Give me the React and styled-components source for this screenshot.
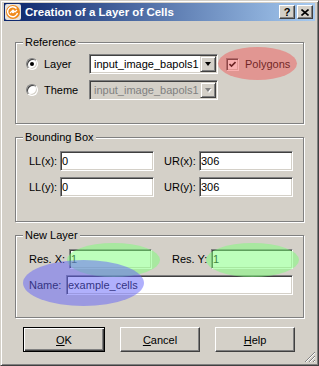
import React from 'react';
import styled, { createGlobalStyle } from 'styled-components';

const Global = createGlobalStyle`
  body {
    margin: 0;
    background: #ffffff;
  }
`;

const Window = styled.div`
  position: relative;
  width: 319px;
  height: 366px;
  box-sizing: border-box;
  background: #d4d0c8;
  border: 1px solid;
  border-color: #d4d0c8 #404040 #404040 #d4d0c8;
  box-shadow: inset 1px 1px #ffffff, inset -1px -1px #808080;
  padding: 2px 3px 3px 3px;
  display: flex;
  flex-direction: column;
  font-family: "Liberation Sans", Arial, sans-serif;
  font-size: 11px;
  color: #000;
  overflow: hidden;
`;

const TitleBar = styled.div`
  height: 18px;
  display: flex;
  align-items: center;
  padding: 0 2px 0 1px;
  background: linear-gradient(to right, #0a246a, #a6caf0);
`;

const TitleText = styled.div`
  margin-left: 4px;
  color: #fff;
  font-weight: bold;
  font-size: 11.5px;
  white-space: nowrap;
`;

const TitleButtons = styled.div`
  margin-left: auto;
  display: flex;
  gap: 2px;
`;

const TitleButton = styled.div`
  width: 16px;
  height: 14px;
  box-sizing: border-box;
  background: #d4d0c8;
  border: 1px solid;
  border-color: #ffffff #404040 #404040 #ffffff;
  box-shadow: inset -1px -1px #808080;
  display: flex;
  align-items: center;
  justify-content: center;
  font-weight: bold;
  font-size: 11px;
  line-height: 1;
`;

const Body = styled.div`
  padding: 21px 0 0 11px;
  display: flex;
  flex-direction: column;
  gap: 13px;
`;

const GroupBox = styled.div`
  position: relative;
  width: 289px;
  height: ${p => p.$h}px;
  box-sizing: border-box;
  border: 1px solid #808080;
  box-shadow: inset 1px 1px #ffffff, 1px 1px #ffffff;
  padding: ${p => p.$pad};
  display: flex;
  flex-direction: column;
  gap: 6px;
`;

const Legend = styled.span`
  position: absolute;
  top: -7px;
  left: 7px;
  padding: 0 2px;
  line-height: 13px;
  background: #d4d0c8;
`;

const Row = styled.div`
  height: 20px;
  display: flex;
  align-items: center;
`;

const Radio = styled.span`
  width: 12px;
  height: 12px;
  box-sizing: border-box;
  border-radius: 50%;
  border: 1px solid;
  border-color: #808080 #ffffff #ffffff #808080;
  box-shadow: inset 1px 1px #404040, inset -1px -1px #d4d0c8;
  background: #fff;
  margin-right: 6px;
  display: flex;
  align-items: center;
  justify-content: center;

  &::after {
    content: '';
    width: 4px;
    height: 4px;
    border-radius: 50%;
    background: ${p => (p.$checked ? '#000' : 'transparent')};
  }
`;

const Label = styled.span`
  width: ${p => p.$w}px;
  flex: none;
  white-space: nowrap;
  margin-left: ${p => p.$ml || 0}px;
`;

const Select = styled.div`
  width: 129px;
  height: 20px;
  box-sizing: border-box;
  display: flex;
  border: 1px solid;
  border-color: #808080 #ffffff #ffffff #808080;
  box-shadow: inset 1px 1px #404040, inset -1px -1px #d4d0c8;
  padding: 1px;
  background: ${p => (p.$disabled ? '#d4d0c8' : '#fff')};
  color: ${p => (p.$disabled ? '#808080' : '#000')};
`;

const SelectText = styled.span`
  flex: 1;
  padding-left: 3px;
  line-height: 16px;
  white-space: nowrap;
  overflow: hidden;
`;

const ArrowButton = styled.span`
  width: 16px;
  height: 16px;
  box-sizing: border-box;
  background: #d4d0c8;
  border: 1px solid;
  border-color: #d4d0c8 #404040 #404040 #d4d0c8;
  box-shadow: inset 1px 1px #ffffff, inset -1px -1px #808080;
  display: flex;
  align-items: center;
  justify-content: center;

  &::after {
    content: '';
    width: 0;
    height: 0;
    border-left: 3.5px solid transparent;
    border-right: 3.5px solid transparent;
    border-top: 4px solid ${p => (p.$disabled ? '#808080' : '#000')};
    filter: ${p => (p.$disabled ? 'drop-shadow(1px 1px 0 #fff)' : 'none')};
  }
`;

const CheckBox = styled.span`
  width: 13px;
  height: 13px;
  box-sizing: border-box;
  margin: 0 6px 0 8px;
  background: #fff;
  border: 1px solid;
  border-color: #808080 #ffffff #ffffff #808080;
  box-shadow: inset 1px 1px #404040, inset -1px -1px #d4d0c8;
  display: flex;
  align-items: center;
  justify-content: center;
`;

const TextInput = styled.input`
  width: ${p => p.$w}px;
  height: 20px;
  box-sizing: border-box;
  margin: 0;
  padding: 0 0 0 1px;
  border: 1px solid;
  border-color: #808080 #ffffff #ffffff #808080;
  box-shadow: inset 1px 1px #404040, inset -1px -1px #d4d0c8;
  outline: none;
  background: #fff;
  font-family: "Liberation Sans", Arial, sans-serif;
  font-size: 11px;
  color: #000;
`;

const ButtonRow = styled.div`
  display: flex;
  padding: 9px 0 0 19px;
  gap: 15px;
`;

const Button = styled.button`
  width: ${p => p.$w}px;
  height: 25px;
  box-sizing: border-box;
  margin: 0;
  padding: 0;
  background: #d4d0c8;
  font-family: "Liberation Sans", Arial, sans-serif;
  font-size: 11px;
  color: #000;
  border: 1px solid;
  border-color: ${p => (p.$default ? '#000' : '#ffffff #404040 #404040 #ffffff')};
  box-shadow: ${p =>
    p.$default
      ? 'inset 1px 1px #ffffff, inset -1px -1px #404040, inset -2px -2px #808080'
      : 'inset -1px -1px #808080'};
`;

const Mark = styled.div`
  position: absolute;
  left: ${p => p.$x}px;
  top: ${p => p.$y}px;
  width: ${p => p.$w}px;
  height: ${p => p.$h}px;
  border-radius: 50%;
  background: ${p => p.$color};
  pointer-events: none;
`;

const Grip = styled.svg`
  position: absolute;
  right: 2px;
  bottom: 2px;
`;

const AppIcon = () => (
  <svg width="16" height="16" viewBox="0 0 16 16">
    <rect x="0" y="0" width="16" height="16" rx="2" fill="#e6e2dc" />
    <circle cx="8" cy="8" r="7" fill="#f08a1c" />
    <path d="M11.5 4.5 A5 5 0 1 0 12.5 9" fill="none" stroke="#fff" strokeWidth="1.4" />
    <path d="M5 9 L8 6 L10 8 L12 6" fill="none" stroke="#fff" strokeWidth="1.2" />
    <circle cx="8" cy="8" r="1.2" fill="#fff" />
  </svg>
);

const CloseGlyph = () => (
  <svg width="8" height="7" viewBox="0 0 8 7">
    <path d="M0.5 0.5 L7.5 6.5 M7.5 0.5 L0.5 6.5" stroke="#000" strokeWidth="1.6" />
  </svg>
);

const CheckGlyph = () => (
  <svg width="7" height="7" viewBox="0 0 7 7">
    <path d="M0.5 3 L2.5 5 L6.5 1" fill="none" stroke="#000" strokeWidth="1.6" />
  </svg>
);

const App = () => {
  return (
    <>
      <Global />
      <Window>
        <TitleBar>
          <AppIcon />
          <TitleText>Creation of a Layer of Cells</TitleText>
          <TitleButtons>
            <TitleButton>?</TitleButton>
            <TitleButton><CloseGlyph /></TitleButton>
          </TitleButtons>
        </TitleBar>

        <Body>
          <GroupBox $h={82} $pad="11px 0 0 10px">
            <Legend>Reference</Legend>
            <Row>
              <Radio $checked />
              <Label $w={45}>Layer</Label>
              <Select>
                <SelectText>input_image_bapols1</SelectText>
                <ArrowButton />
              </Select>
              <CheckBox><CheckGlyph /></CheckBox>
              <span>Polygons</span>
            </Row>
            <Row>
              <Radio />
              <Label $w={45}>Theme</Label>
              <Select $disabled>
                <SelectText>input_image_bapols1</SelectText>
                <ArrowButton $disabled />
              </Select>
            </Row>
          </GroupBox>

          <GroupBox $h={85} $pad="13px 0 0 13px">
            <Legend>Bounding Box</Legend>
            <Row>
              <Label $w={31}>LL(x):</Label>
              <TextInput $w={94} defaultValue="0" />
              <Label $w={35} $ml={10}>UR(x):</Label>
              <TextInput $w={94} defaultValue="306" />
            </Row>
            <Row>
              <Label $w={31}>LL(y):</Label>
              <TextInput $w={94} defaultValue="0" />
              <Label $w={35} $ml={10}>UR(y):</Label>
              <TextInput $w={94} defaultValue="306" />
            </Row>
          </GroupBox>

          <GroupBox $h={83} $pad="13px 0 0 13px">
            <Legend>New Layer</Legend>
            <Row>
              <Label $w={40}>Res. X:</Label>
              <TextInput $w={83} defaultValue="1" />
              <Label $w={39} $ml={20}>Res. Y:</Label>
              <TextInput $w={82} defaultValue="1" />
            </Row>
            <Row>
              <Label $w={37}>Name:</Label>
              <TextInput $w={227} defaultValue="example_cells" />
            </Row>
          </GroupBox>
        </Body>

        <ButtonRow>
          <Button $w={82} $default><u>O</u>K</Button>
          <Button $w={80}><u>C</u>ancel</Button>
          <Button $w={80}><u>H</u>elp</Button>
        </ButtonRow>

        <Grip width="12" height="12" viewBox="0 0 12 12">
          <path d="M11 1 L1 11 M11 5 L5 11 M11 9 L9 11" stroke="#808080" strokeWidth="1" />
          <path d="M11 2 L2 11 M11 6 L6 11 M11 10 L10 11" stroke="#fff" strokeWidth="1" />
        </Grip>

        <Mark $x={217} $y={46} $w={79} $h={33} $color="rgba(241, 79, 80, 0.45)" />
        <Mark $x={66} $y={242} $w={93} $h={34} $color="rgba(124, 255, 120, 0.5)" />
        <Mark $x={205} $y={242} $w={93} $h={34} $color="rgba(124, 255, 120, 0.5)" />
        <Mark $x={22} $y={259} $w={121} $h={46} $color="rgba(98, 98, 250, 0.5)" />
      </Window>
    </>
  );
};

export default App;
